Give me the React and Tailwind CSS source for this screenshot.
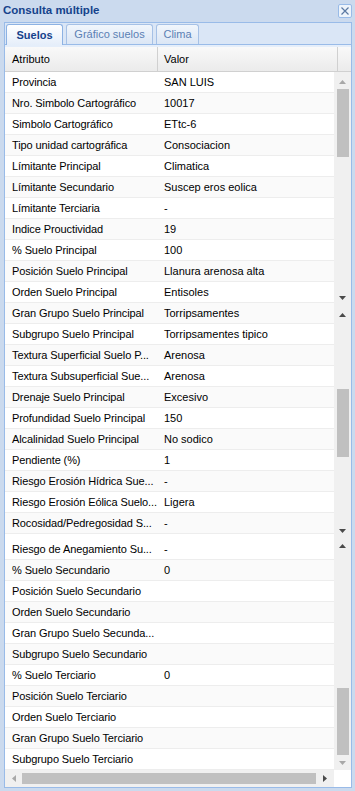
import React from "react";

const rows = [
  ["Provincia", "SAN LUIS"],
  ["Nro. Simbolo Cartográfico", "10017"],
  ["Simbolo Cartográfico", "ETtc-6"],
  ["Tipo unidad cartográfica", "Consociacion"],
  ["Límitante Principal", "Climatica"],
  ["Límitante Secundario", "Suscep eros eolica"],
  ["Límitante Terciaria", "-"],
  ["Indice Prouctividad", "19"],
  ["% Suelo Principal", "100"],
  ["Posición Suelo Principal", "Llanura arenosa alta"],
  ["Orden Suelo Principal", "Entisoles"],
  ["Gran Grupo Suelo Principal", "Torripsamentes"],
  ["Subgrupo Suelo Principal", "Torripsamentes tipico"],
  ["Textura Superficial Suelo P...", "Arenosa"],
  ["Textura Subsuperficial Sue...", "Arenosa"],
  ["Drenaje Suelo Principal", "Excesivo"],
  ["Profundidad Suelo Principal", "150"],
  ["Alcalinidad Suelo Principal", "No sodico"],
  ["Pendiente (%)", "1"],
  ["Riesgo Erosión Hídrica Sue...", "-"],
  ["Riesgo Erosión Eólica Suelo...", "Ligera"],
  ["Rocosidad/Pedregosidad S...", "-"],
  ["Riesgo de Anegamiento Su...", "-"],
  ["% Suelo Secundario", "0"],
  ["Posición Suelo Secundario", ""],
  ["Orden Suelo Secundario", ""],
  ["Gran Grupo Suelo Secunda...", ""],
  ["Subgrupo Suelo Secundario", ""],
  ["% Suelo Terciario", "0"],
  ["Posición Suelo Terciario", ""],
  ["Orden Suelo Terciario", ""],
  ["Gran Grupo Suelo Terciario", ""],
  ["Subgrupo Suelo Terciario", ""],
];

function Arrow({ dir, light }) {
  const fill = light ? "#a8a8a8" : "#4a4a4a";
  if (dir === "up")
    return (
      <svg width="7" height="4" viewBox="0 0 7 4">
        <path d="M3.5 0 L7 4 L0 4 Z" fill={fill} />
      </svg>
    );
  if (dir === "down")
    return (
      <svg width="7" height="4" viewBox="0 0 7 4">
        <path d="M0 0 L7 0 L3.5 4 Z" fill={fill} />
      </svg>
    );
  if (dir === "left")
    return (
      <svg width="4" height="7" viewBox="0 0 4 7">
        <path d="M4 0 L4 7 L0 3.5 Z" fill={fill} />
      </svg>
    );
  return (
    <svg width="4" height="7" viewBox="0 0 4 7">
      <path d="M0 0 L4 3.5 L0 7 Z" fill={fill} />
    </svg>
  );
}

function Row({ label, value, index }) {
  const alt = index % 2 === 1;
  const first = index === 22;
  return (
    <div
      className={
        "flex border-b border-[#ededed] text-black " +
        (alt ? "bg-[#fafafa] " : "bg-white ") +
        (first ? "h-[26px] pt-[5px]" : "h-[21px]")
      }
    >
      <div className="w-[153px] shrink-0 pl-[7px] flex items-center whitespace-nowrap tracking-[-0.1px]">{label}</div>
      <div className="flex-1 pl-[6px] flex items-center whitespace-nowrap overflow-hidden">{value}</div>
    </div>
  );
}

export default function App() {
  return (
    <div className="w-[355px] h-[791px] bg-[#cbdaee] font-['Liberation_Sans',Arial,sans-serif] text-[11px] overflow-hidden">
      {/* title bar */}
      <div className="h-[22px] flex items-center justify-between pl-[3px] pr-[3px]">
        <span className="text-[11.5px] font-bold text-[#15428b]">Consulta múltiple</span>
        <div className="w-[14px] h-[14px] border border-[#99bbe8] bg-[#eef4fb] rounded-[2px] flex items-center justify-center">
          <svg width="8" height="8" viewBox="0 0 8 8">
            <path d="M0.5 0.5 L7.5 7.5 M7.5 0.5 L0.5 7.5" stroke="#5b79a3" strokeWidth="1.2" />
          </svg>
        </div>
      </div>

      <div className="ml-[4px] w-[348px] border-x border-t border-b border-[#99bbe8] bg-white">
        {/* tab strip */}
        <div className="h-[22px] bg-[#dae6f6] border-b border-[#99bbe8] flex items-end gap-[3px] pl-[1px]">
          <div className="w-[57px] h-[21px] -mb-[1px] rounded-t-[3px] border border-b-0 border-[#8db2e3] bg-gradient-to-b from-white to-[#e5eefa] flex items-center justify-center font-bold text-[#15428b]">
            Suelos
          </div>
          <div className="w-[87px] h-[20px] rounded-t-[3px] border border-b-0 border-[#a6c1e6] bg-gradient-to-b from-[#f1f6fc] to-[#dbe6f5] flex items-center justify-center text-[#5b7fb4]">
            Gráfico suelos
          </div>
          <div className="w-[43px] h-[20px] rounded-t-[3px] border border-b-0 border-[#a6c1e6] bg-gradient-to-b from-[#f1f6fc] to-[#dbe6f5] flex items-center justify-center text-[#5b7fb4]">
            Clima
          </div>
        </div>
        <div className="h-[2px] bg-[#e5eefa]"></div>

        {/* grid header */}
        <div className="h-[25px] flex bg-gradient-to-b from-[#f9f9f9] to-[#ebebeb] border-b border-[#d0d0d0] text-black">
          <div className="w-[153px] pl-[7px] flex items-center border-r border-[#d0d0d0]">Atributo</div>
          <div className="w-[180px] pl-[6px] flex items-center border-r border-[#d0d0d0]">Valor</div>
          <div className="flex-1"></div>
        </div>

        {/* grid body */}
        <div className="flex">
          <div className="w-[329px]">
            {rows.map((r, i) => (
              <Row key={i} label={r[0]} value={r[1]} index={i} />
            ))}
          </div>
          <div className="w-[17px] bg-[#f0f0f0] flex flex-col">
            {/* segment 1 */}
            <div className="h-[233px] flex flex-col">
              <div className="h-[17px] flex justify-center pt-[8px]"><Arrow dir="up" light /></div>
              <div className="flex-1">
                <div className="ml-[3px] w-[12px] h-[68px] bg-[#c0c0c0]"></div>
              </div>
              <div className="h-[17px] flex justify-center pt-[8px]"><Arrow dir="down" /></div>
            </div>
            {/* segment 2 */}
            <div className="h-[233px] flex flex-col">
              <div className="h-[17px] flex justify-center pt-[8px]"><Arrow dir="up" /></div>
              <div className="flex-1 pt-[67px]">
                <div className="ml-[3px] w-[12px] h-[68px] bg-[#c0c0c0]"></div>
              </div>
              <div className="h-[17px] flex justify-center pt-[8px]"><Arrow dir="down" /></div>
            </div>
            {/* segment 3 */}
            <div className="flex-1 flex flex-col">
              <div className="h-[17px] flex justify-center pt-[6px]"><Arrow dir="up" /></div>
              <div className="flex-1 pt-[133px]">
                <div className="ml-[3px] w-[12px] h-[67px] bg-[#c0c0c0]"></div>
              </div>
              <div className="h-[15px] flex justify-center pt-[6px]"><Arrow dir="down" light /></div>
            </div>
          </div>
        </div>

        {/* horizontal scrollbar */}
        <div className="h-[17px] flex">
          <div className="w-[329px] bg-[#f0f0f0] flex items-center">
            <div className="w-[17px] flex justify-center"><Arrow dir="left" light /></div>
            <div className="w-[294px] h-[11px] bg-[#c0c0c0]"></div>
            <div className="flex-1 flex justify-center"><Arrow dir="right" /></div>
          </div>
          <div className="flex-1 bg-white"></div>
        </div>
      </div>
    </div>
  );
}
